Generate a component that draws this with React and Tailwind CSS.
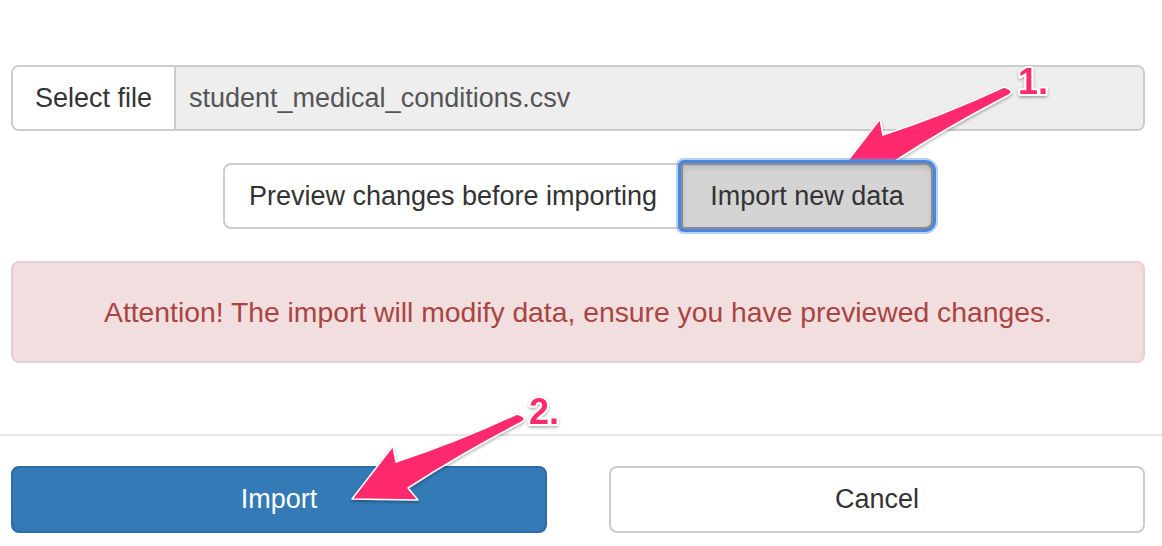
import React from "react";

const PINK = "#fe2c6d";

function Arrow({ x, y }) {
  return (
    <g transform={`translate(${x} ${y})`} filter="url(#ds)">
      <path
        d="M165,-85 Q105,-57 44,-37 L41,-53 L0,0 L66,1 L56,-11 Q110,-46 168,-76 Q178,-81 165,-85 Z"
        fill={PINK}
        stroke="#ffffff"
        strokeWidth="1.5"
        strokeLinejoin="round"
      />
    </g>
  );
}

function Label({ x, y, children }) {
  return (
    <text
      x={x}
      y={y}
      fill={PINK}
      stroke="#ffffff"
      strokeWidth="4"
      strokeLinejoin="round"
      paintOrder="stroke"
      filter="url(#ds)"
      style={{ fontFamily: "'Liberation Sans', Arial, sans-serif", fontWeight: 700, fontSize: "36px" }}
    >
      {children}
    </text>
  );
}

export default function App() {
  return (
    <div className="relative w-[1162px] h-[546px] bg-white overflow-hidden font-['Liberation_Sans',Arial,sans-serif] text-[27px] leading-none">
      <div className="pl-[11px] pr-[17px] pt-[65px] pb-[71px]">
        <div className="flex h-[66px] border-2 border-[#ccc] rounded-lg overflow-hidden">
          <div className="w-[163px] shrink-0 border-r-2 border-[#ccc] bg-white flex items-center justify-center text-[#333]">
            Select file
          </div>
          <div className="flex-1 bg-[#eee] flex items-center pl-[13px] text-[#555]">
            student_medical_conditions.csv
          </div>
        </div>

        <div className="mt-[32px] flex justify-center">
          <div className="flex">
            <div className="w-[460px] h-[66px] border-2 border-[#ccc] rounded-l-lg bg-white flex items-center justify-center text-[#333]">
              Preview changes before importing
            </div>
            <div className="relative z-10 -ml-[2px] w-[252px] h-[66px] border-2 border-[#8c8c8c] rounded-r-lg rounded-l-[3px] bg-[#d4d4d4] flex items-center justify-center text-[#333] shadow-[inset_0_3px_5px_rgba(0,0,0,0.125),0_0_0_3px_#4a86e0,0_0_0_5px_rgba(96,150,235,0.45)]">
              Import new data
            </div>
          </div>
        </div>

        <div className="mt-[32px] h-[102px] border-2 border-[#ebccd1] bg-[#f2dede] rounded-lg flex items-center justify-center text-[#a94442] text-[28.3px]">
          Attention! The import will modify data, ensure you have previewed changes.
        </div>
      </div>

      <div className="border-t-2 border-[#e5e5e5] pl-[11px] pr-[17px] pt-[30px]">
        <div className="grid grid-cols-2 gap-[62px]">
          <div className="h-[67px] border-2 border-[#2e6da4] bg-[#337ab7] rounded-lg flex items-center justify-center text-white">
            Import
          </div>
          <div className="h-[67px] border-2 border-[#ccc] bg-white rounded-lg flex items-center justify-center text-[#333]">
            Cancel
          </div>
        </div>
      </div>

      <svg
        className="absolute inset-0 pointer-events-none"
        width="1162"
        height="546"
        viewBox="0 0 1162 546"
      >
        <defs>
          <filter id="ds" x="-20%" y="-20%" width="140%" height="140%">
            <feDropShadow dx="0" dy="1.5" stdDeviation="1.5" floodColor="#000" floodOpacity="0.35" />
          </filter>
        </defs>
        <Arrow x={839} y={172} />
        <Arrow x={352} y={499} />
        <Label x={1018} y={94}>1.</Label>
        <Label x={529} y={424}>2.</Label>
      </svg>
    </div>
  );
}
